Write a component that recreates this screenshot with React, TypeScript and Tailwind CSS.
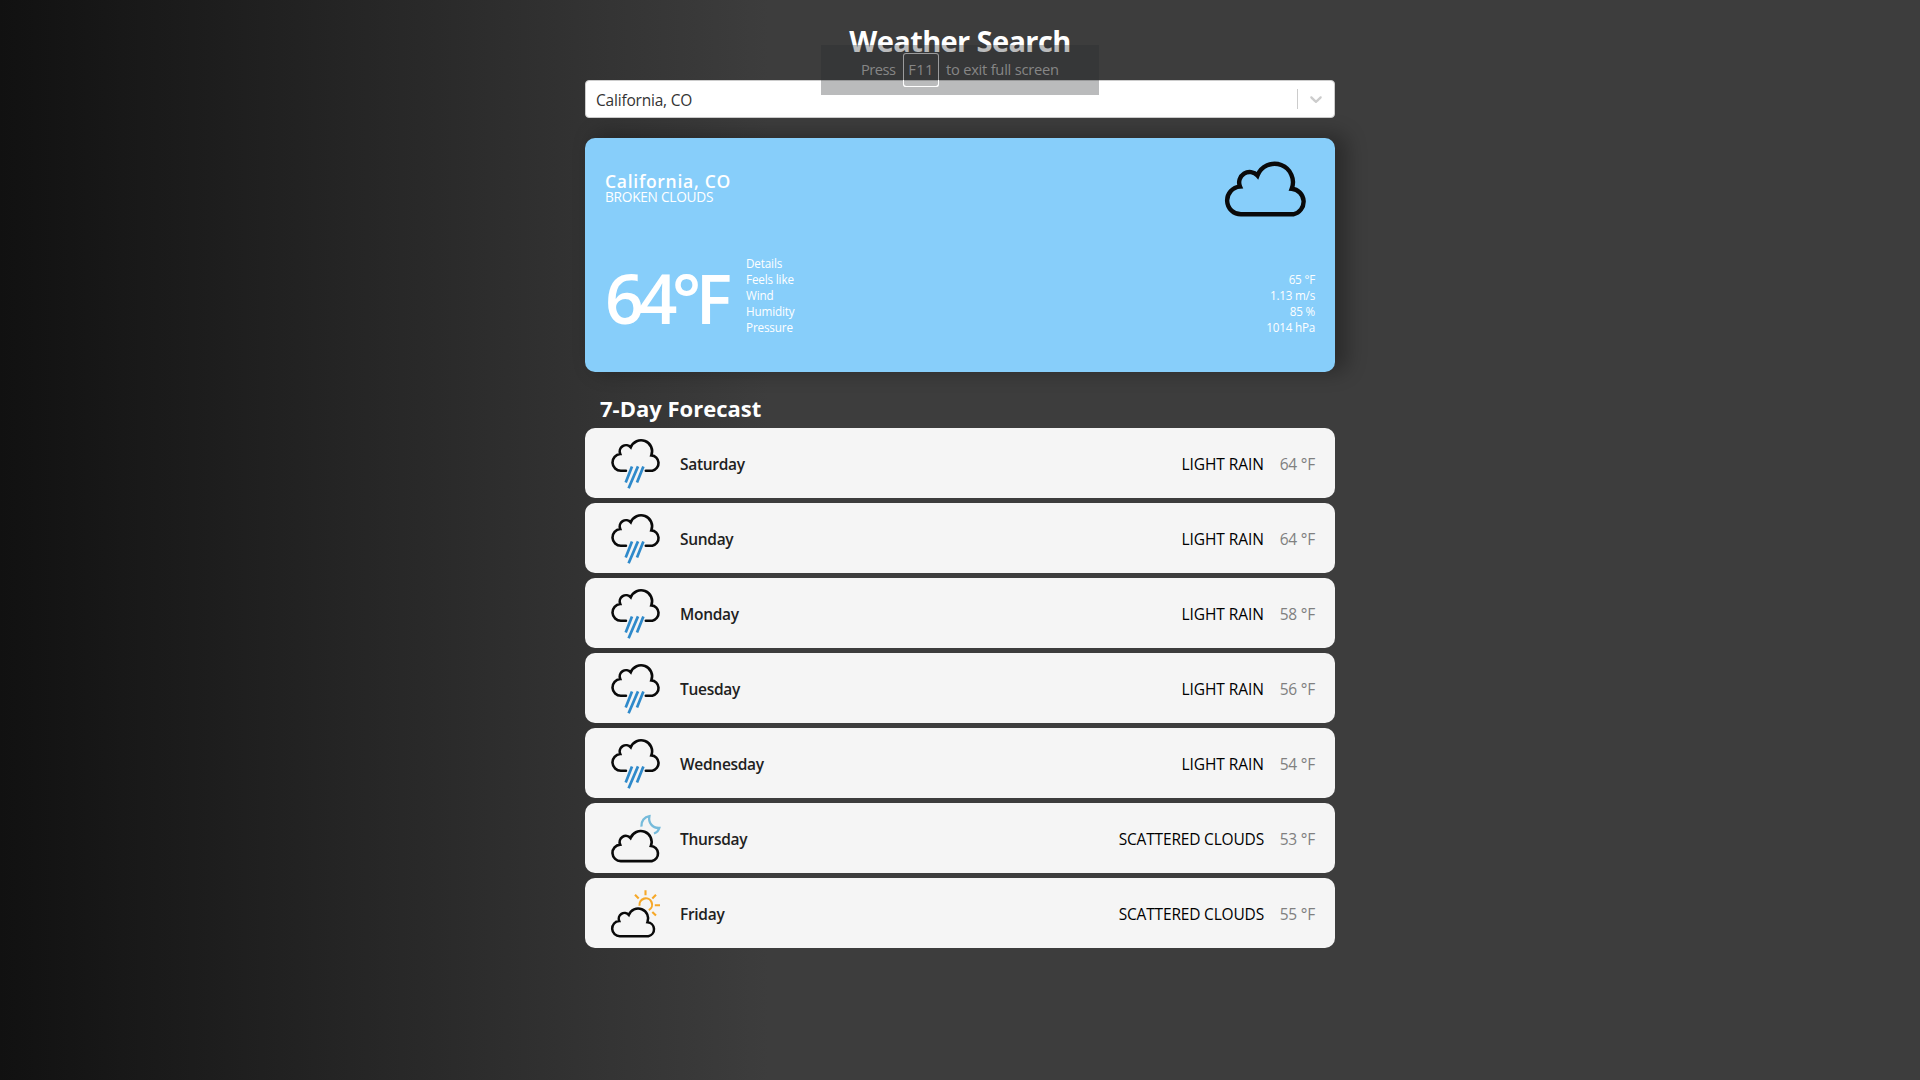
import React from "react";

type Icon = "rain" | "night" | "day";

interface Day {
  name: string;
  icon: Icon;
  description: string;
  temp: string;
}

const forecast: Day[] = [
  { name: "Saturday", icon: "rain", description: "LIGHT RAIN", temp: "64 °F" },
  { name: "Sunday", icon: "rain", description: "LIGHT RAIN", temp: "64 °F" },
  { name: "Monday", icon: "rain", description: "LIGHT RAIN", temp: "58 °F" },
  { name: "Tuesday", icon: "rain", description: "LIGHT RAIN", temp: "56 °F" },
  { name: "Wednesday", icon: "rain", description: "LIGHT RAIN", temp: "54 °F" },
  { name: "Thursday", icon: "night", description: "SCATTERED CLOUDS", temp: "53 °F" },
  { name: "Friday", icon: "day", description: "SCATTERED CLOUDS", temp: "55 °F" },
];

const details = [
  { label: "Details", value: "" },
  { label: "Feels like", value: "65 °F" },
  { label: "Wind", value: "1.13 m/s" },
  { label: "Humidity", value: "85 %" },
  { label: "Pressure", value: "1014 hPa" },
];

const CLOUD_TOP =
  "A13.87 13.87 0 0 1 15 25.6 A10.5 10.5 0 0 1 32.5 14.5 A18.3 18.3 0 0 1 66.7 27.8 A12.9 12.9 0 0 1 68.3 53.3";

function CloudIcon() {
  return (
    <svg className="overflow-visible" width="83" height="56" viewBox="0 0 83 56" fill="none" stroke="#0a0a0a" strokeWidth="4.4">
      <path d={`M16.3 53.3 ${CLOUD_TOP} Z`} />
    </svg>
  );
}

function DayIcon({ kind }: { kind: Icon }) {
  return (
    <svg className="mt-0.5 overflow-visible" width="52" height="52" viewBox="0 0 52 52" fill="none">
      {kind === "rain" && (
        <>
          <g transform="translate(1.2 0.6) scale(0.602)" stroke="#0a0a0a" strokeWidth="4.3" strokeLinecap="round">
            <path d={`M24.5 53.3 L16.3 53.3 ${CLOUD_TOP} L57.5 53.3`} />
          </g>
          <g stroke="#2f8acb" strokeWidth="2.7">
            <path d="M22 28.4 L15.7 44.6 M28 28.4 L18.6 50.2 M33.4 28.4 L27 44.6" />
          </g>
        </>
      )}
      {kind === "night" && (
        <>
          <g transform="translate(1.2 16.4) scale(0.595)" stroke="#0a0a0a" strokeWidth="4.4">
            <path d={`M16.3 53.3 ${CLOUD_TOP} Z`} />
          </g>
          <path
            d="M31.4 13.6 C31 8 34.5 3.9 39.4 3.2 C38.2 9.5 42 15.3 49.3 15 C48.6 17.4 46.6 19.6 44 20.5"
            stroke="#76bbdb"
            strokeWidth="2.3"
          />
        </>
      )}
      {kind === "day" && (
        <>
          <g transform="translate(1 19) scale(0.547)" stroke="#0a0a0a" strokeWidth="4.6">
            <path d={`M16.3 53.3 ${CLOUD_TOP} Z`} />
          </g>
          <g stroke="#f6a828" strokeWidth="2.1">
            <path d="M29.6 17.8 A6.3 6.3 0 1 1 38.8 22.2" />
            <path d="M35.5 2.2 V7.2 M25 6.8 L28.7 10.6 M46 6.8 L42.3 10.6 M44.8 17.3 H50 M42.3 24 L46 27.6" />
          </g>
        </>
      )}
    </svg>
  );
}

function FullScreenNotice() {
  return (
    <div className="absolute top-[45px] left-[821px] flex h-[50px] w-[278px] items-start bg-[#292b2e]/32 pt-2 pl-10 text-[14.7px] leading-[32px] text-[#868686]">
      <span className="w-[42px] tracking-[-0.5px]">Press</span>
      <span className="relative h-[34px] w-[36px] rounded-[3px] border border-white/50 border-b-white text-center leading-[30px] tracking-[0.3px]">
        F11
        <span className="absolute -right-px -bottom-px -left-px h-[7px] rounded-b-[3px] border border-t-0 border-white" />
      </span>
      <span className="ml-[7px] tracking-[-0.24px]">to exit full screen</span>
    </div>
  );
}

export default function App() {
  return (
    <div className="relative h-[1080px] w-full overflow-hidden bg-[linear-gradient(90deg,#111111_0%,#3d3d3d_40%)] font-['Open_Sans',sans-serif]">
      <main className="mx-auto flex w-[750px] flex-col">
        <h1 className="h-20 text-center text-[29px] leading-[82px] font-bold tracking-[-0.62px] text-white">
          Weather Search
        </h1>

        <div className="flex h-[38px] items-center rounded-[4px] border border-[#cccccc] bg-white">
          <span className="flex-1 pt-0.5 pl-2.5 text-[15.5px] leading-[36px] tracking-[-0.2px] text-[#333333]">California, CO</span>
          <span className="h-5 w-px bg-[#cccccc]" />
          <span className="flex w-9 justify-center">
            <svg width="20" height="20" viewBox="0 0 20 20" fill="#cccccc">
              <path d="M4.516 7.548c0.436-0.446 1.043-0.481 1.576 0l3.908 3.747 3.908-3.747c0.533-0.481 1.141-0.446 1.574 0 0.436 0.445 0.408 1.197 0 1.615-0.406 0.418-4.695 4.502-4.695 4.502-0.217 0.223-0.502 0.335-0.787 0.335s-0.57-0.112-0.789-0.335c0 0-4.287-4.084-4.695-4.502s-0.436-1.17 0-1.615z" />
            </svg>
          </span>
        </div>

        <section className="mt-5 h-[234px] rounded-[10px] bg-[#87cefa] px-5 text-white shadow-[10px_-2px_20px_2px_rgba(0,0,0,0.3)]">
          <div className="flex h-[100px] justify-between">
            <div className="pt-[34px]">
              <p className="text-[17.5px] leading-[18px] font-semibold tracking-[0.72px]">California, CO</p>
              <p className="text-[13.7px] leading-[14px] tracking-[-0.26px]">BROKEN CLOUDS</p>
            </div>
            <div className="pt-[23px] pr-[7px]">
              <CloudIcon />
            </div>
          </div>
          <div className="flex pt-[17px]">
            <p className="w-[141px] pt-2 text-[68px] leading-[70px] font-semibold tracking-[-5.4px] whitespace-nowrap">64°F</p>
            <dl className="flex-1">
              {details.map((d) => (
                <div key={d.label} className="flex justify-between text-[11.7px] leading-4">
                  <dt className="tracking-[-0.15px]">{d.label}</dt>
                  <dd className="tracking-[-0.22px]">{d.value}</dd>
                </div>
              ))}
            </dl>
          </div>
        </section>

        <h2 className="h-14 pl-[15px] text-[22px] leading-[73px] font-bold text-white">7-Day Forecast</h2>

        <ul className="flex flex-col gap-[5px]">
          {forecast.map((d) => (
            <li key={d.name} className="flex h-[70px] items-center rounded-[10px] bg-[#f5f5f5] pr-5 pl-[25px] text-[15.5px]">
              <DayIcon kind={d.icon} />
              <span className="flex-1 pt-[3px] pl-[18px] font-[550] tracking-[-0.3px] text-[#212121]">{d.name}</span>
              <span className={`pt-[3px] text-black ${d.icon === "rain" ? "tracking-[-0.05px]" : "tracking-[-0.18px]"}`}>
                {d.description}
              </span>
              <span className="w-[51px] pt-[3px] text-right tracking-[-0.22px] text-[#808080]">{d.temp}</span>
            </li>
          ))}
        </ul>
      </main>
      <FullScreenNotice />
    </div>
  );
}
